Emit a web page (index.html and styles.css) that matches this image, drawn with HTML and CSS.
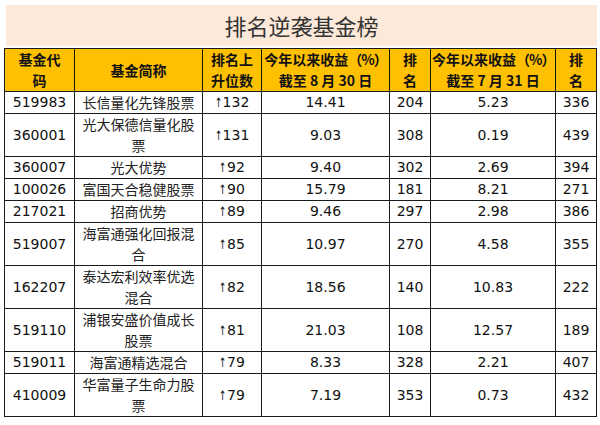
FILE: index.html
```html
<!DOCTYPE html>
<html lang="zh-CN">
<head>
<meta charset="utf-8">
<title>排名逆袭基金榜</title>
<link rel="stylesheet" href="styles.css">
</head>
<body>
<div class="page">
  <div class="title">排名逆袭基金榜</div>
  <table class="grid">
    <colgroup>
      <col class="c-code"><col class="c-name"><col class="c-up"><col class="c-ret"><col class="c-rank"><col class="c-ret2"><col class="c-rank">
    </colgroup>
    <thead>
      <tr>
        <th>基金代<br>码</th>
        <th>基金简称</th>
        <th>排名上<br>升位数</th>
        <th>今年以来收益<span class="pct">（%）</span><br>截至 8 月 30 日</th>
        <th>排<br>名</th>
        <th>今年以来收益<span class="pct">（%）</span><br>截至 7 月 31 日</th>
        <th>排<br>名</th>
      </tr>
    </thead>
    <tbody>
      <tr><td>519983</td><td>长信量化先锋股票</td><td><span class="arr">↑</span>132</td><td>14.41</td><td>204</td><td>5.23</td><td>336</td></tr>
      <tr><td>360001</td><td>光大保德信量化股<br>票</td><td><span class="arr">↑</span>131</td><td>9.03</td><td>308</td><td>0.19</td><td>439</td></tr>
      <tr><td>360007</td><td>光大优势</td><td><span class="arr">↑</span>92</td><td>9.40</td><td>302</td><td>2.69</td><td>394</td></tr>
      <tr><td>100026</td><td>富国天合稳健股票</td><td><span class="arr">↑</span>90</td><td>15.79</td><td>181</td><td>8.21</td><td>271</td></tr>
      <tr><td>217021</td><td>招商优势</td><td><span class="arr">↑</span>89</td><td>9.46</td><td>297</td><td>2.98</td><td>386</td></tr>
      <tr><td>519007</td><td>海富通强化回报混<br>合</td><td><span class="arr">↑</span>85</td><td>10.97</td><td>270</td><td>4.58</td><td>355</td></tr>
      <tr><td>162207</td><td>泰达宏利效率优选<br>混合</td><td><span class="arr">↑</span>82</td><td>18.56</td><td>140</td><td>10.83</td><td>222</td></tr>
      <tr><td>519110</td><td>浦银安盛价值成长<br>股票</td><td><span class="arr">↑</span>81</td><td>21.03</td><td>108</td><td>12.57</td><td>189</td></tr>
      <tr><td>519011</td><td>海富通精选混合</td><td><span class="arr">↑</span>79</td><td>8.33</td><td>328</td><td>2.21</td><td>407</td></tr>
      <tr><td>410009</td><td>华富量子生命力股<br>票</td><td><span class="arr">↑</span>79</td><td>7.19</td><td>353</td><td>0.73</td><td>432</td></tr>
    </tbody>
  </table>
</div>
</body>
</html>
```
FILE: styles.css
```css
html, body {
  margin: 0;
  padding: 0;
  background: #ffffff;
}
.page {
  padding-top: 5px;
}
.title {
  margin: 0 3px 0 6px;
  height: 41px;
  background: #fde9d9;
  color: #333333;
  font-family: "Noto Sans CJK SC", sans-serif;
  font-size: 22px;
  line-height: 41px;
  text-align: center;
}
.grid {
  margin: 2px 0 0 4px;
  width: 593px;
  table-layout: fixed;
  border-collapse: collapse;
  font-family: "DejaVu Sans", "Noto Sans CJK SC", sans-serif;
  font-size: 14px;
  color: #111111;
}
.c-code { width: 70px; }
.c-name { width: 128px; }
.c-up { width: 59px; }
.c-ret { width: 128px; }
.c-rank { width: 41px; }
.c-ret2 { width: 125px; }
.grid th, .grid td {
  border: 1px solid #1a1a1a;
  text-align: center;
  vertical-align: middle;
  padding: 0 1px;
  height: 21px;
  line-height: 21px;
  white-space: nowrap;
}
.grid th {
  background: #ffc000;
  font-family: "Noto Sans CJK SC", sans-serif;
  font-weight: 700;
  font-size: 14px;
  color: #111111;
}
.grid td:nth-child(2) {
  font-family: "Noto Sans CJK SC", sans-serif;
  color: #222222;
}
.pct {
  letter-spacing: -1px;
}
.arr {
  display: inline-block;
  font-family: "DejaVu Sans", sans-serif;
  font-size: 13px;
  line-height: 10px;
  transform: scaleX(0.7);
  margin: 0 -1px 0 -2px;
  color: #111111;
}
```
